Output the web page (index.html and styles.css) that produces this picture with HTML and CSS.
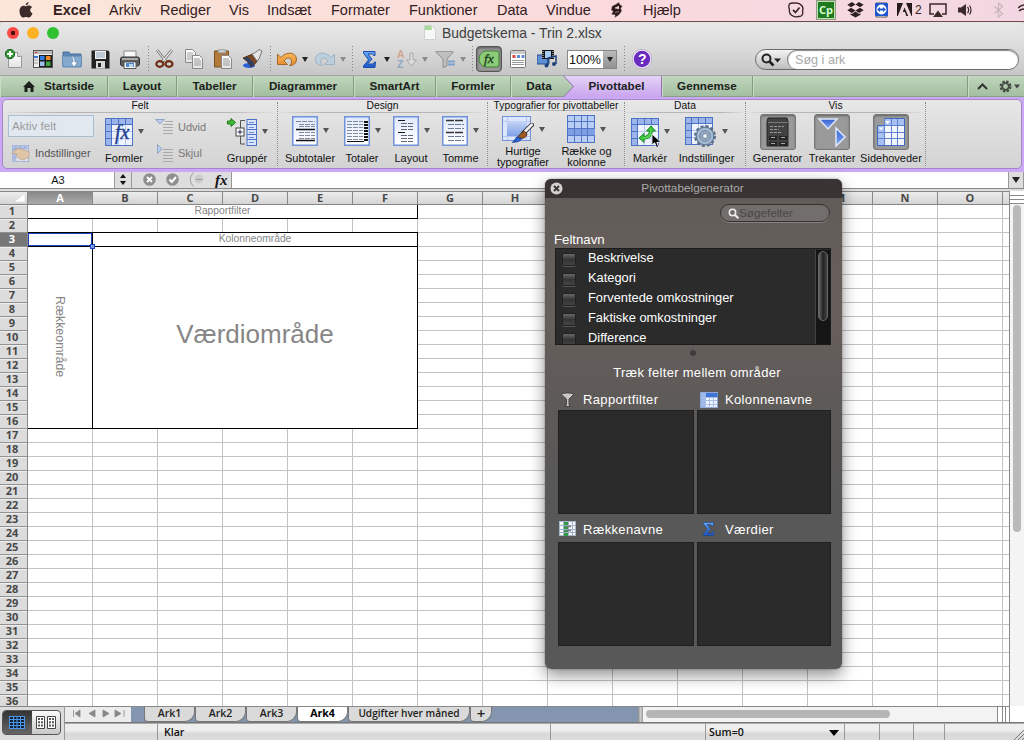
FILE: index.html
```html
<!DOCTYPE html>
<html lang="da">
<head>
<meta charset="utf-8">
<title>Budgetskema - Trin 2.xlsx</title>
<link rel="stylesheet" href="styles.css">
</head>
<body>
<svg class="defs" width="0" height="0">
  <defs>
    <linearGradient id="page" x1="0" y1="0" x2="0" y2="1"><stop offset="0" stop-color="#fff"/><stop offset="1" stop-color="#e4e4e4"/></linearGradient>
    <linearGradient id="blue" x1="0" y1="0" x2="0" y2="1"><stop offset="0" stop-color="#c6d6f8"/><stop offset="1" stop-color="#7f9fe4"/></linearGradient>
    <linearGradient id="sheet" x1="0" y1="0" x2="0" y2="1"><stop offset="0" stop-color="#dfe9fd"/><stop offset="1" stop-color="#fff"/></linearGradient>
    <linearGradient id="tri" x1="0" y1="0" x2="0" y2="1"><stop offset="0" stop-color="#3560cf"/><stop offset="1" stop-color="#7ea8f4"/></linearGradient>
    <linearGradient id="sig" x1="0" y1="0" x2="0" y2="1"><stop offset="0" stop-color="#67aaf2"/><stop offset="1" stop-color="#1c55c8"/></linearGradient>
    <linearGradient id="orange" x1="0" y1="0" x2="0" y2="1"><stop offset="0" stop-color="#f8b758"/><stop offset="1" stop-color="#e98a2c"/></linearGradient>
    <symbol id="pivot" viewBox="0 0 28 28">
      <rect x=".5" y=".5" width="27" height="27" fill="#eef3fe" stroke="#4d72c4"/>
      <path d="M1 1h26v5H1zM1 6h5v21H1z" fill="#9bb4ea"/>
      <path d="M13.500 1v5M20.500 1v5M1 13.500h5M1 20.500h5M6.500 1v26M1 6.500h26" stroke="#4d72c4" fill="none"/>
      <path d="M13.500 7v20M20.500 7v20M7 13.500h20M7 20.500h20" stroke="#b4c6f0" fill="none"/>
    </symbol>
    <symbol id="brush" viewBox="0 0 24 24">
      <path d="M22 2L13 11" stroke="#333" stroke-width="5" stroke-linecap="round"/>
      <path d="M22 2L14 10" stroke="#eee" stroke-width="3" stroke-linecap="round"/>
      <path d="M14 9l3 3c-1 4-4 5-7 5l-4-1c3-2 4-6 8-7z" fill="#9a5a20" stroke="#4d2c10"/>
      <path d="M6 15l5 2c-1 3-5 4-10 4 2-1 3-4 5-6z" fill="#2b62d4" stroke="#173c91"/>
    </symbol>
  </defs>
</svg>

<nav class="menubar">
  <svg width="14" height="16" viewBox="0 0 14 16"><path d="M9.500 0c.1 1.800-1.300 3.300-2.800 3.400C6.500 1.700 8 .2 9.500 0zM7 4.300c.8 0 1.700-.8 3-.7 1.300 0 2.400.7 3 1.700-2.600 1.500-2.200 5 .5 6-.7 2-2.200 4.300-3.700 4.300-1.100 0-1.500-.7-2.800-.7s-1.700.7-2.800.7C2.500 15.600.5 12.400.5 9.200c0-3.400 2-5.500 4-5.500 1.200 0 1.900.6 2.500.6z" fill="#3b2a2a"/></svg>
  <b>Excel</b><span>Arkiv</span><span>Rediger</span><span>Vis</span><span>Indsæt</span><span>Formater</span><span>Funktioner</span><span>Data</span><span>Vindue</span>
  <svg width="14" height="16" viewBox="0 0 14 16"><path d="M9 0l1 2.500L12.500 4 11 6.500l1 2.500-3 4-4.500 3 .5-3-4-.5 2-3L1 8l1-4 4-2zM9 4L5 6l4 1M5 10.500l4-1" fill="#2d1a1a" stroke="#f9dadb" stroke-width=".5"/></svg>
  <span>Hjælp</span>
  <svg width="16" height="16" viewBox="0 0 16 16"><path d="M2 1.500C4 .5 6 1.200 8 1c5 0 8 4 6.500 8 1 3-1 6-4 5.500C5 16 .5 12 1.500 7.500.5 5 .5 3 2 1.500z" fill="none" stroke="#3b2a2a" stroke-width="1.400"/><path d="M5 8l2.500 2.500 4-5" fill="none" stroke="#3b2a2a" stroke-width="1.800"/></svg>
  <span class="cp">Cp</span>
  <svg width="17" height="16" viewBox="0 0 17 16"><path d="M5 0l3.500 2.500L4 5.300.3 2.700zM12 0l4.700 2.700L13 5.300 8.500 2.500zM4 5.800l4.500 2.700L5 11 .3 8.300zM13 5.800l3.700 2.500L12 11 8.500 8.500zM8.500 9.500L12 12l1.500-.7v1.500l-5 2.700-5-2.700v-1.500L5 12z" fill="#2d1f20"/></svg>
  <svg width="14" height="16" viewBox="0 0 14 16"><path d="M1 1h11v14H1z" fill="#fff" stroke="#555"/><rect x="0" y="1" width="13" height="13" rx="1" fill="#1f55cf"/><circle cx="6.500" cy="7.500" r="5" fill="#fff"/><path d="M2 7.500l3-2.500v1.500h3V5l3 2.500L8 10V8.500H5V10z" fill="#1f55cf"/></svg>
  <span class="adobe"><svg width="15" height="16" viewBox="0 0 15 16"><path d="M0 1h15v13H0z" fill="#261a1c"/><path d="M6 1h3l5.500 13h-3.300L7.500 5.500 5.800 10h2.200l1.300 4H.8z" fill="#f0d8dd"/></svg><span>2</span></span>
  <svg width="18" height="15" viewBox="0 0 18 15"><path d="M5 11H1V1h16v10h-4" fill="none" stroke="#3b2a2a" stroke-width="1.500"/><path d="M9 7.500l5 6.500H4z" fill="#3b2a2a"/></svg>
  <svg width="14" height="14" viewBox="0 0 14 14"><path d="M0 4.500h3L8 1v12L3 9.500H0z" fill="#3b2a2a"/><path d="M9.500 4c1.500 1.500 1.500 4.500 0 6M11.500 2.500c2 2.500 2 6.500 0 9" fill="none" stroke="#3b2a2a" stroke-width="1.200"/></svg>
  <svg width="10" height="16" viewBox="0 0 10 16"><path d="M.5 4.500l8 7-4 3.500V1l4 3.500-8 7" fill="none" stroke="#cbb6bb" stroke-width="1.300"/></svg>
  <svg width="6" height="16" viewBox="0 0 6 16"><path d="M0 6c2-2 4-3 6-3M1 9c2-2 3-2 5-2" fill="none" stroke="#3b2a2a" stroke-width="1.500"/></svg>
</nav>

<div class="window">
  <header class="titlebar">
    <div class="lights"><i class="red"></i><i class="amber"></i><i class="green"></i></div>
    <div class="title">
      <svg width="12" height="15" viewBox="0 0 12 15"><path d="M.5.500h7l4 4v10H.5z" fill="#f7f7f7" stroke="#ccd5cc"/><path d="M1 1h6.500l.5 4H1z" fill="#a6d89b"/></svg>
      <span>Budgetskema - Trin 2.xlsx</span>
    </div>
  </header>

  <div class="toolbar">
    <svg width="19" height="20" viewBox="0 0 19 20"><path d="M3.500 3.500h9l4 4v11h-13z" fill="url(#page)" stroke="#999"/><path d="M12.500 3.500v4h4" fill="#ddd" stroke="#999"/><circle cx="5" cy="5" r="4.700" fill="#2f9a33" stroke="#16601a"/><path d="M5 2v6M2 5h6" stroke="#fff" stroke-width="2"/></svg>
    <svg width="20" height="18" viewBox="0 0 20 18"><rect x=".5" y=".5" width="19" height="17" fill="#eee" stroke="#555"/><path d="M1 1h18v3H1z" fill="#bbb"/><path d="M2 2h2v1H2z" fill="#d22"/><path d="M6 5h13v12H6z" fill="#1c1c1c"/><path d="M1 6h4v2H1z" fill="#3a78e0"/><path d="M1 10h4M1 13h4" stroke="#999"/><path d="M7 6h4.500v4H7z" fill="#2f7fea"/><path d="M13 6h4.500v4H13z" fill="#f08a24"/><path d="M7 11.500h4.500V16H7z" fill="#9fc1ee"/><path d="M13 11.500h4.500V16H13z" fill="#40aa3f"/></svg>
    <svg width="20" height="18" viewBox="0 0 20 18"><path d="M1 2h6l1 2h11v12H1z" fill="#5b87b5" stroke="#4a719a"/><path d="M0 6h20l-1 11H1z" fill="#84aacf" stroke="#5d85ad"/><path d="M9 6c3 0 4 3 4 6h2.500L12 17l-3.500-5H11c0-2 0-4-2-6z" fill="#fff" stroke="#4b6e94" stroke-width=".5"/></svg>
    <svg width="19" height="19" viewBox="0 0 19 19"><path d="M1 .5h16l1.500 1.500v16.500h-18V.5z" fill="#222"/><path d="M4 1h11v8H4z" fill="#f2f2f2"/><path d="M5 3h9M5 5h9M5 7h9" stroke="#8da0b8"/><path d="M5 11h9v7.500H5z" fill="#d8d8d8"/><path d="M7 13h3v4H7z" fill="#222"/></svg>
    <svg width="20" height="19" viewBox="0 0 20 19"><path d="M4 1h12v7H4z" fill="#fafafa" stroke="#888"/><rect x=".5" y="7" width="19" height="9" rx="2" fill="#5e5e5e" stroke="#333"/><path d="M2 8h16v2H2z" fill="#aaa"/><path d="M4 12h12v6.500H4z" fill="#f7f7f7" stroke="#555"/><path d="M6 13h8v4H6z" fill="#4e86cc"/><path d="M9 14h4v3H9z" fill="#b9d8f4"/></svg>
    <i class="dots"></i>
    <svg width="20" height="20" viewBox="0 0 20 20"><path d="M2 1l9.500 12M17 1L7 13" stroke="#777" stroke-width="2.800"/><path d="M2 1l9.500 12M17 1L7 13" stroke="#e4e4e4" stroke-width="1.200"/><ellipse cx="4.800" cy="15" rx="3.500" ry="2.800" fill="none" stroke="#6d2c14" stroke-width="2.200"/><ellipse cx="14" cy="15" rx="3.500" ry="2.800" fill="none" stroke="#6d2c14" stroke-width="2.200"/></svg>
    <svg width="19" height="20" viewBox="0 0 19 20"><path d="M.5.500h7l3 3v10H.5z" fill="url(#page)" stroke="#888"/><path d="M2 4h6M2 6h6M2 8h6M2 10h5" stroke="#aaa"/><path d="M7.500 6.500h7l3 3v10h-10z" fill="url(#page)" stroke="#888"/><path d="M9 10h6M9 12h7M9 14h7M9 16h7" stroke="#999"/></svg>
    <svg width="19" height="20" viewBox="0 0 19 20"><path d="M.5 2h14v16H.5z" fill="#b27a39" stroke="#79501f"/><path d="M4 1h2l1-1h2l1 1h2v3H4z" fill="#ccc" stroke="#777" stroke-width=".6"/><path d="M7.500 6.500h7l3 3v10h-10z" fill="url(#page)" stroke="#888"/><path d="M9 10h6M9 12h7M9 14h7M9 16h7" stroke="#999"/></svg>
    <svg width="21" height="20" viewBox="0 0 21 20"><ellipse cx="7" cy="16.500" rx="6" ry="2.500" fill="#2a5fd8"/><path d="M1 9l10-4 5 6c-2 3-4 5-7 7-1-3-4-6-8-9z" fill="#7a4824" stroke="#4d2f12"/><path d="M2 10c4 2 6 5 7 8l3-3c-1-3-4-5-7-7z" fill="#2f3f66"/><path d="M10 5c3-1 4-2 7-4.500l3 1.500c-1 3-2 5-3 8l-2 2z" fill="#e4e4e4" stroke="#777"/></svg>
    <i class="dots"></i>
    <svg width="20" height="16" viewBox="0 0 20 16"><path d="M.5 3v10.500h10L7 10c2-4 8-4 7.500 1 0 1.500-1 3-2 3.500 4 0 7-2 7-6.500C19 1 9 0 4 6.500z" fill="url(#orange)" stroke="#a2682a"/></svg>
    <i class="tri"></i>
    <svg width="20" height="16" viewBox="0 0 20 16"><path d="M19.500 3v10.500h-10L13 10c-2-4-8-4-7.500 1 0 1.500 1 3 2 3.500-4 0-7-2-7-6.500C1 1 11 0 16 6.500z" fill="#bccfdd" stroke="#9eb3c4"/></svg>
    <i class="tri dim"></i>
    <i class="dots"></i>
    <svg width="13" height="17" viewBox="0 0 13 17"><path d="M.5.500h11.500v4h-1.500c0-1-1-1.500-2-1.500H5l4 5.200L4.500 13H9c1.500 0 2-.7 2.300-2h1.200L12 16.500H.5V15l5-6.200-5-6.600z" fill="url(#sig)" stroke="#1d4eae"/></svg>
    <i class="tri"></i>
    <div class="sort"><div><span class="a">A</span><span class="z">Z</span></div><svg width="11" height="18" viewBox="0 0 11 18"><path d="M4 3h3v7h3.500l-5 6-5-6H4z" fill="#ddd" stroke="#a6a6a6"/></svg></div>
    <i class="tri dim"></i>
    <svg width="21" height="17" viewBox="0 0 21 17"><path d="M.5 1c4-1 14-1 18 0L12 8v7l-4 1.500V8z" fill="#bfbfbf" stroke="#8e8e8e"/><path d="M13 10.500h7M13 13.500h7" stroke="#7ea2d2" stroke-width="2"/></svg>
    <i class="tri dim"></i>
    <i class="dots"></i>
    <div class="fxbtn"><svg width="22" height="18" viewBox="0 0 22 18"><path d="M7 1h12q2 0 2 2v12q0 2-2 2H7Q1 15 1 9t6-8z" fill="#8ccb78" stroke="#3e7c34"/><text x="6" y="13" font-family="Liberation Serif, serif" font-style="italic" font-size="13.500" fill="#1b3a17" stroke="#1b3a17" stroke-width=".3">fx</text></svg></div>
    <svg width="16" height="18" viewBox="0 0 16 18"><rect x=".5" y=".5" width="15" height="17" rx="1" fill="#fff" stroke="#777"/><path d="M1 1h14v3H1z" fill="#ccc"/><path d="M2.500 5h3v3h-3z" fill="#e0463c"/><path d="M7 5h3v3H7zM11.500 5h3v3h-3z" fill="#5d8ad2"/><path d="M2 10.500h12M2 12.500h12M2 14.500h12" stroke="#999"/></svg>
    <svg width="20" height="18" viewBox="0 0 20 18"><path d="M0 5h12v9H0z" fill="#5d8fd5" stroke="#2d4e86"/><path d="M5 0h12v9H5z" fill="#111"/><path d="M8 1h6v7H8z" fill="#a9cdf2"/><path d="M6 1v8M16 1v8" stroke="#eee" stroke-dasharray="1 1"/><path d="M11 15V8l8-2v8" fill="none" stroke="#1d437c" stroke-width="1.500"/><circle cx="9.500" cy="15.500" r="2" fill="#1d437c"/><circle cx="17" cy="14" r="2" fill="#1d437c"/></svg>
    <div class="percent"><span>100%</span><b><i class="tri"></i></b></div>
    <i class="dots"></i>
    <svg width="20" height="20" viewBox="0 0 20 20"><circle cx="10" cy="10" r="9" fill="#6a2bc0" stroke="#f6f0ff" stroke-width="1.500"/><circle cx="10" cy="10" r="9.700" fill="none" stroke="#9c8bb5" stroke-width=".6"/><text x="6" y="15" font-family="Liberation Sans, sans-serif" font-weight="bold" font-size="14" fill="#fff">?</text></svg>
    <div class="search"><div class="lens"><svg width="20" height="15" viewBox="0 0 20 15"><circle cx="5.500" cy="5.500" r="4" fill="none" stroke="#222" stroke-width="2"/><path d="M8.500 8.500l4 4" stroke="#222" stroke-width="2.600"/><path d="M13 5.500h7l-3.500 4z" fill="#222"/></svg></div><span>Søg i ark</span></div>
  </div>

  <nav class="tabs">
    <span class="home"><svg width="12" height="11" viewBox="0 0 12 11"><path d="M6 0l6 6h-1.500v5h-3V7h-3v4h-3V6H0z" fill="#1c211b"/></svg>Startside</span>
    <span>Layout</span><span>Tabeller</span><span>Diagrammer</span><span>SmartArt</span><span>Formler</span><span class="before">Data</span>
    <span class="active"><em>Pivottabel</em></span><span>Gennemse</span>
    <span class="rest"></span>
    <span class="tools"><svg width="11" height="7" viewBox="0 0 11 7"><path d="M1 6l4.500-4.500L10 6" fill="none" stroke="#333" stroke-width="2"/></svg><svg width="21" height="13" viewBox="0 0 21 13"><circle cx="6.500" cy="6.500" r="4.700" fill="none" stroke="#444c43" stroke-width="2.600" stroke-dasharray="2.300 1.400"/><circle cx="6.500" cy="6.500" r="3.300" fill="none" stroke="#444c43" stroke-width="1.800"/><path d="M15 4.500h6l-3 4z" fill="#444"/></svg></span>
  </nav>

  <section class="ribbon">
    <div class="panel">
      <div class="group felt">
        <h3>Felt</h3>
        <div class="body">
          <div class="stack">
            <div class="field">Aktiv felt</div>
            <div class="row faded"><svg width="19" height="17" viewBox="0 0 28 26"><use href="#pivot" width="28" height="26"/><path d="M2 10l9-5 9 3 7 2v9l-10 4-8-4-1-5-6-1z" fill="#e6b98a" stroke="#9b7149"/></svg><span>Indstillinger</span></div>
          </div>
          <div class="btn"><div class="pic"><svg width="28" height="28" viewBox="0 0 28 28"><use href="#pivot"/><text x="10" y="21" font-family="Liberation Serif, serif" font-style="italic" font-size="20" fill="#1d3f8e" stroke="#1d3f8e" stroke-width=".4">fx</text></svg><i class="tri"></i></div><label>Formler</label></div>
          <div class="stack mini">
            <div class="row"><svg width="18" height="17" viewBox="0 0 18 17"><path d="M.5.500h9L5 5z" fill="#b8cff0" stroke="#8fa5c4"/><path d="M10 2.500h8M8 5.500h10M8 8.500h10M8 11.500h10M8 14.500h10" stroke="#a9a9a9"/></svg><span>Udvid</span></div>
            <div class="row"><svg width="18" height="19" viewBox="0 0 18 19"><path d="M2.500.500v9L7 5z" fill="#b8cff0" stroke="#8fa5c4"/><path d="M8 5.500h10M8 8.500h10M8 11.500h10M8 14.500h10M8 17.500h10" stroke="#a9a9a9"/></svg><span>Skjul</span></div>
          </div>
          <div class="btn"><div class="pic"><svg width="30" height="28" viewBox="0 0 30 28"><path d="M.5 3H4V.5L8.500 4.500 4 8.500V6H.5z" fill="#44bd36" stroke="#1d7a18"/><path d="M18 2.500h-4.500V26H18" fill="none" stroke="#555"/><rect x="9" y="10" width="8" height="8" fill="#fff" stroke="#444"/><path d="M13 11.500v5M10.500 14h5" stroke="#224"/><rect x="20" y="1.500" width="9.500" height="26" fill="#dbe6fc" stroke="#4d72c4"/><path d="M20 6.500h9M20 11.500h9M20 16.500h9M20 21.500h9" stroke="#4d72c4"/><path d="M22 4.500h5M22 9.500h5M22 14.500h5M22 19.500h5M22 24.500h5" stroke="#6d8dd6"/></svg><i class="tri"></i></div><label>Gruppér</label></div>
        </div>
      </div>
      <div class="group design">
        <h3>Design</h3>
        <div class="body">
          <div class="btn"><div class="pic"><svg width="26" height="30" viewBox="0 0 26 30"><rect x=".75" y=".75" width="24.500" height="28.500" fill="url(#sheet)" stroke="#7191d8" stroke-width="1.500"/><path d="M4 5.500h19M7 8.500h16M7 10.500h16M7 16.500h16M7 19.500h16M7 22.500h16" stroke="#808a9c" stroke-dasharray="5 1"/><path d="M4 13.500h19M4 24.500h19" stroke="#111" stroke-width="1.500"/></svg><i class="tri"></i></div><label>Subtotaler</label></div>
          <div class="btn"><div class="pic"><svg width="26" height="30" viewBox="0 0 26 30"><rect x=".75" y=".75" width="24.500" height="28.500" fill="url(#sheet)" stroke="#7191d8" stroke-width="1.500"/><path d="M3 5.500h16M3 8.500h16M3 11.500h16M3 14.500h16M3 17.500h16M3 20.500h16M3 23.500h16" stroke="#808a9c" stroke-dasharray="5 1"/><path d="M22 5v21" stroke="#111" stroke-width="4" stroke-dasharray="2 1"/><path d="M3 25.500h17" stroke="#111"/></svg><i class="tri"></i></div><label>Totaler</label></div>
          <div class="btn"><div class="pic"><svg width="26" height="30" viewBox="0 0 26 30"><rect x=".75" y=".75" width="24.500" height="28.500" fill="url(#sheet)" stroke="#7191d8" stroke-width="1.500"/><path d="M5 4.500h7M5 16.500h7" stroke="#111"/><path d="M8 7.500h12M8 10.500h12M8 13.500h12M8 19.500h12M8 22.500h12M8 25.500h12" stroke="#5d6675" stroke-dasharray="6 1"/></svg><i class="tri"></i></div><label>Layout</label></div>
          <div class="btn"><div class="pic"><svg width="26" height="30" viewBox="0 0 26 30"><rect x=".75" y=".75" width="24.500" height="28.500" fill="url(#sheet)" stroke="#7191d8" stroke-width="1.500"/><path d="M4 4.500h18M4 16.500h18" stroke="#333" stroke-width="1.300" stroke-dasharray="8 1"/><path d="M6 8.500h16M6 12.500h16M6 20.500h16M6 24.500h16" stroke="#6f7c94" stroke-dasharray="6 1"/></svg><i class="tri"></i></div><label>Tomme</label></div>
        </div>
      </div>
      <div class="group typo">
        <h3>Typografier for pivottabeller</h3>
        <div class="body">
          <div class="btn"><div class="pic"><svg width="32" height="30" viewBox="0 0 32 30"><rect x=".5" y="1.500" width="28" height="24" fill="#dbe6fc" stroke="#7191d8"/><path d="M5.500 2v23M24.500 2v23M1 6.500h27M1 21.500h27" stroke="#b3c7f2"/><path d="M5 6h19v15H5z" fill="url(#blue)"/><use href="#brush" x="9" y="8" width="23" height="22"/></svg><i class="tri"></i></div><label>Hurtige<br>typografier</label></div>
          <div class="btn"><div class="pic"><svg width="28" height="30" viewBox="0 0 28 30"><rect x=".5" y=".5" width="27" height="27" fill="#b9cdf6" stroke="#4d72c4"/><path d="M1 14h27v6H1z" fill="#7f9fe4"/><path d="M7.500 1v26M14.500 1v26M20.500 1v26M1 6.500h27M1 13.500h27M1 20.500h27" stroke="#5478c8"/></svg><i class="tri"></i></div><label>Række og<br>kolonne</label></div>
        </div>
      </div>
      <div class="group data">
        <h3>Data</h3>
        <div class="body">
          <div class="btn"><div class="pic"><svg width="28" height="28" viewBox="0 0 28 28"><use href="#pivot"/><path d="M12 20c5 0 8-3 8-8" fill="none" stroke="#1c8a24" stroke-width="4"/><path d="M15.500 13l4.500-5 4.500 5zM13 15.500L8 20l5 4.500z" fill="#3fc43f" stroke="#1c8a24"/><path d="M12 20c5 0 8-3 8-8" fill="none" stroke="#55d455" stroke-width="2"/></svg><i class="tri"></i>
            <svg class="cursor" width="11" height="16" viewBox="0 0 11 16"><path d="M1 1v11l2.700-2.300L5.500 14.500l2-.8-1.700-4.400H10z" fill="#000" stroke="#fff" stroke-width=".8"/></svg></div><label>Markér</label></div>
          <div class="btn"><div class="pic"><svg width="32" height="31" viewBox="0 0 32 31"><use href="#pivot" width="28" height="28"/><circle cx="20" cy="19" r="9.500" fill="#8fa6c2" stroke="#5b708d" stroke-width="3" stroke-dasharray="3 2"/><circle cx="20" cy="19" r="8.800" fill="#a4b8d1" stroke="#60758f"/><circle cx="20" cy="19" r="5.200" fill="#9ab0ca" stroke="#6b8099"/><circle cx="20" cy="19" r="2.500" fill="#f0f4fa" stroke="#6b8099"/></svg><i class="tri"></i></div><label>Indstillinger</label></div>
        </div>
      </div>
      <div class="group vis">
        <h3>Vis</h3>
        <div class="body">
          <div class="btn"><div class="well"><svg width="24" height="30" viewBox="0 0 24 30"><path d="M2 1h19l1 4v24H1V5z" fill="#424242" stroke="#222"/><path d="M2 5.500h20" stroke="#777"/><path d="M4 9.500h14M4 12.500h9M4 15.500h11" stroke="#999" stroke-dasharray="3 1"/><path d="M3 19h8v4H3zM13 19h8v4h-8zM3 25h8v4H3zM13 25h8v4h-8z" fill="#262626"/><path d="M5 20.500h4M15 20.500h4M5 26.500h4M15 26.500h4" stroke="#aaa"/></svg></div><label>Generator</label></div>
          <div class="btn"><div class="well"><svg width="30" height="30" viewBox="0 0 30 30"><path d="M2 2h18l-9 10z" fill="url(#tri)" stroke="#dfe7f7" stroke-width="1.500"/><path d="M19 11v18l9-9z" fill="url(#tri)" stroke="#dfe7f7" stroke-width="1.500"/></svg></div><label>Trekanter</label></div>
          <div class="btn"><div class="well"><svg width="28" height="28" viewBox="0 0 28 28"><path d="M7.500.500h20v27H.5v-20h7z" fill="#f3f6ff" stroke="#4268c0"/><path d="M7 1h20v6H7zM1 8h6v19H1z" fill="#a9c0f2"/><path d="M7.500 1v26M14.500 1v26M20.500 1v26M7 7.500h20M1 14.500h26M1 20.500h26" stroke="#6184d2"/><path d="M8 3h5l-2.500 3zM1.500 9.500h5L4 12z" fill="#fff"/></svg></div><label>Sidehoveder</label></div>
        </div>
      </div>
    </div>
  </section>

  <div class="formula">
    <div class="name">A3</div>
    <div class="step"><svg width="6" height="11" viewBox="0 0 6 11"><path d="M0 4l3-4 3 4zM0 7l3 4 3-4z" fill="#111"/></svg></div>
    <div class="ops">
      <svg width="13" height="13" viewBox="0 0 13 13"><circle cx="6.500" cy="6.500" r="6.300" fill="#8f8f8f"/><path d="M4 4l5 5M9 4l-5 5" stroke="#fff" stroke-width="1.800"/></svg>
      <svg width="13" height="13" viewBox="0 0 13 13"><circle cx="6.500" cy="6.500" r="6.300" fill="#8f8f8f"/><path d="M3.500 6.500l2.300 2.500L10 4" fill="none" stroke="#fff" stroke-width="2"/></svg>
      <svg width="16" height="15" viewBox="0 0 16 15"><path d="M5 .5C0 4 0 11 5 14.500" fill="none" stroke="#999"/><circle cx="10" cy="7" r="4.500" fill="#ccc"/><path d="M7 7.500h6" stroke="#999"/></svg>
      <span>fx</span>
    </div>
    <div class="input"></div>
    <div class="drop"><i class="tri"></i></div>
  </div>

  <main class="book">
    <div class="cols"><b class="corner"><svg width="12" height="9" viewBox="0 0 12 9"><path d="M11 0v9H0z" fill="#fff" stroke="#ccc" stroke-width=".5"/></svg></b><b class="sel">A</b><b>B</b><b>C</b><b>D</b><b>E</b><b>F</b><b>G</b><b>H</b><b>I</b><b>J</b><b>K</b><b>L</b><b>M</b><b>N</b><b>O</b><b class="end"></b></div>
    <div class="rows"><b>1</b><b>2</b><b class="sel">3</b><b>4</b><b>5</b><b>6</b><b>7</b><b>8</b><b>9</b><b>10</b><b>11</b><b>12</b><b>13</b><b>14</b><b>15</b><b>16</b><b>17</b><b>18</b><b>19</b><b>20</b><b>21</b><b>22</b><b>23</b><b>24</b><b>25</b><b>26</b><b>27</b><b>28</b><b>29</b><b>30</b><b>31</b><b>32</b><b>33</b><b>34</b><b>35</b><b>36</b></div>
    <div class="sheet">
      <div class="pivot">
        <div class="pfilter">Rapportfilter</div>
        <div class="pgap"></div>
        <div class="pcell"><i class="handle"></i></div>
        <div class="pcols">Kolonneområde</div>
        <div class="prows"><span>Rækkeområde</span></div>
        <div class="pvals">Værdiområde</div>
      </div>
    </div>
    <div class="vscroll"><div class="split"></div><div class="thumb"></div></div>
  </main>

  <footer class="bottom">
    <div class="views"><div class="toggle">
      <div class="on"><svg width="16" height="13" viewBox="0 0 16 13"><rect x=".5" y=".5" width="15" height="12" fill="#123" stroke="#4d96ea"/><path d="M4.500 0v13M8 0v13M11.500 0v13M0 3.500h16M0 6.500h16M0 9.500h16" stroke="#4d96ea"/></svg></div>
      <div><svg width="20" height="13" viewBox="0 0 20 13"><path d="M.5.500h8v12h-8zM11.500.500h8v12h-8z" fill="#fff" stroke="#444"/><path d="M3 2v9M6 2v9M14 2v9M17 2v9" stroke="#444" stroke-width="1.800" stroke-dasharray="2 1.300"/></svg></div>
    </div></div>
    <div class="sheetbar">
      <div class="nav"><svg width="55" height="9" viewBox="0 0 55 9"><path d="M1.500 1v7M8 1v7L3 4.500zM23 1v7l-6-3.500zM31 1v7l6-3.500zM43 1v7l6-3.500zM52 1v7" fill="#888" stroke="#888" stroke-width=".8"/></svg></div>
      <div class="sheets"><span>Ark1</span><span>Ark2</span><span>Ark3</span><span class="cur">Ark4</span><span class="long">Udgifter hver måned</span><span class="plus">+</span></div>
      <div class="grip"></div>
      <div class="hscroll"><div class="thumb"></div></div>
      <div class="hsplit"></div>
      <div class="void"></div>
    </div>
    <div class="status"><span></span><span>Klar</span><span></span><span class="sum">Sum=0<svg width="10" height="6" viewBox="0 0 10 6"><path d="M0 0h10L5 6z" fill="#000"/></svg></span><span></span><span></span><span></span><span class="last"><svg width="12" height="12" viewBox="0 0 12 12"><path d="M1 12L12 1M5 12l7-7M9 12l3-3" stroke="#777"/></svg></span></div>
  </footer>
</div>

<aside class="builder">
  <header><svg width="13" height="13" viewBox="0 0 13 13"><circle cx="6.500" cy="6.500" r="6" fill="#d4d2d1"/><path d="M4 4l5 5M9 4l-5 5" stroke="#3a3534" stroke-width="1.900"/></svg><span>Pivottabelgenerator</span></header>
  <div class="find"><svg width="11" height="11" viewBox="0 0 11 11"><circle cx="4.500" cy="4.500" r="3.200" fill="none" stroke="#eee" stroke-width="1.500"/><path d="M6.800 6.800l3.500 3.500" stroke="#eee" stroke-width="2"/></svg>Søgefelter</div>
  <h4>Feltnavn</h4>
  <div class="list">
    <ul><li><i></i>Beskrivelse</li><li><i></i>Kategori</li><li><i></i>Forventede omkostninger</li><li><i></i>Faktiske omkostninger</li><li><i></i>Difference</li></ul>
    <div class="bar"><div></div></div>
  </div>
  <div class="dot"></div>
  <p>Træk felter mellem områder</p>
  <div class="zones">
    <h5><svg width="18" height="16" viewBox="0 0 18 16"><path d="M2 2c4-1.500 9-1.500 13 0l-5 5v6l2 1.500H5L7.500 13V7z" fill="#c9c9c9" stroke="#444"/></svg>Rapportfilter</h5>
    <h5><svg width="18" height="16" viewBox="0 0 18 16"><rect x=".5" y=".5" width="17" height="15" fill="#eef4ff" stroke="#8fa6d6"/><path d="M1 1h4v14H1z" fill="#9db8e8"/><path d="M5.500 1h12v4h-12z" fill="#3f73d6"/><path d="M5.500 5v11M9.500 5v11M13.500 5v11M1 5.500h16M1 8.500h16M1 12.500h16" stroke="#a9bee6"/></svg>Kolonnenavne</h5>
    <div class="zone"></div><div class="zone"></div>
    <h5><svg width="18" height="16" viewBox="0 0 18 16"><rect x=".5" y=".5" width="16" height="14" fill="#f5f7fa" stroke="#a9b5c8"/><path d="M5 1h4v14H5z" fill="#2f9a46"/><path d="M4.500 0v15M9.500 0v15M13.500 0v15M1 4.500h16M1 8.500h16M1 11.500h16" stroke="#a3b1c9"/><path d="M7 5.500h5M7 9.500h5" stroke="#777" stroke-width="1.500"/></svg>Rækkenavne</h5>
    <h5><svg width="18" height="16" viewBox="0 0 18 16"><path d="M3.500 1.500h10v3.500h-1.500l-1-1.500H7L10.500 8 7 12.500h4.500l1-2H14l-.5 4h-10V13l4-5-4-5z" fill="url(#sig)" stroke="#1b3f8d" stroke-width=".6"/></svg>Værdier</h5>
    <div class="zone"></div><div class="zone"></div>
  </div>
</aside>
</body>
</html>
```
FILE: styles.css
```css
* { box-sizing: border-box; }
body { margin: 0; width: 1024px; height: 740px; overflow: hidden; background: #dcdcdc; font-family: "Liberation Sans", Arial, sans-serif; color: #111; position: relative; }
h3, h4, h5, p, ul { margin: 0; padding: 0; font-weight: normal; }
svg { display: block; flex: none; }
.defs { position: absolute; }
.tri { display: block; flex: none; width: 0; height: 0; border: 3px solid transparent; border-top: 5px solid #222; border-bottom: 0; }
.tri.dim { border-top-color: #8b8b8b; }

/* system menu bar */
.menubar { display: grid; grid-template-columns: 34px 56px 51px 69px 38px 64px 78px 88px 49px 64px 33px 145px 29px 30px 28px 22px 32px 29px 36px 24px 6px; align-items: center; height: 22px; padding: 0 0 1px 19px; border-bottom: 1px solid #6b4a48; background: linear-gradient(90deg, #fbe6d9, #fbe0d9 30%, #fadadd 60%, #f2d7e2); font-size: 14.5px; color: #33201f; white-space: nowrap; line-height: 19px; }
.menubar .cp { width: 18px; height: 18px; border: 1px solid #bfe0ae; outline: 1px solid #8b9c80; background: #1f7a1f; color: #d9ffcf; font: bold 11px/16px "Open Sans", sans-serif; text-align: center; }
.adobe { display: flex; align-items: center; gap: 3px; font-size: 12px; line-height: 16px; }

.window { height: 718px; display: flex; flex-direction: column; }
.titlebar { display: grid; grid-template-columns: 424px 1fr; align-items: center; height: 22px; background: linear-gradient(#e8e8e8, #dedede); border-radius: 5px 5px 0 0; }
.lights { display: flex; gap: 8px; padding-left: 7px; }
.lights i { width: 12px; height: 12px; border-radius: 50%; }
.red { background: radial-gradient(circle, #4c0c0b 2px, #fc4a47 2.5px); }
.amber { background: #fdb124; }
.green { background: #30c231; }
.title { display: flex; gap: 6px; align-items: center; font-size: 13.9px; color: #3f3f3f; }

.toolbar { display: grid; grid-template-columns: 28px 29px 29px 29px 28px 7px 30px 29px 28px 28px 7px 25px 13px 25px 12px 11px 21px 13px 25px 13px 25px 12px 4px 34px 27px 30px 57px 8px 123px 264px; align-items: center; height: 32px; padding: 1px 5px; background: linear-gradient(#dedede, #c6c6c6); border-bottom: 1px solid #a4a4a4; }
.dots { width: 1px; height: 26px; background: repeating-linear-gradient(#888 0 1px, transparent 1px 3px); }
.sort { display: flex; align-items: center; }
.sort span { display: block; width: 9px; font-size: 10.5px; font-weight: bold; line-height: 10px; }
.sort .a { color: #d2a68e; }
.sort .z { color: #8da5bf; }
.fxbtn { width: 26px; height: 26px; display: grid; place-items: center; border: 1px solid #555; border-radius: 4px; background: #999; box-shadow: inset 0 1px 3px #555; }
.percent { display: flex; width: 50px; height: 19px; border: 1px solid #888; background: #fff; font-size: 12.5px; line-height: 18px; }
.percent span { width: 35px; padding-left: 1px; }
.percent b { flex: 1; display: grid; place-items: center; background: linear-gradient(#bbb, #929292); }
.search { display: flex; width: 264px; height: 21px; border: 1px solid #6a6a6a; border-radius: 11px; background: linear-gradient(#f4f4f4, #bcbcbc); }
.search .lens { width: 31px; padding: 3px 0 0 5px; }
.search span { flex: 1; border-radius: 10px; border-left: 1px solid #777; background: #fff; color: #aaa; font-size: 12.6px; line-height: 21px; padding-left: 7px; box-shadow: inset 0 1px 1px #888; }

/* ribbon tabs */
.tabs { display: grid; grid-template-columns: 108px 69px 76px 101px 82px 75px 52px 99px 91px 215px 56px; height: 21px; background: linear-gradient(#c0d6bd, #a2bea0); border-bottom: 1px solid #86a184; font-weight: bold; font-size: 11.7px; line-height: 20px; text-align: center; color: #1c211b; }
.tabs > span { border-right: 1px solid #819c7e; box-shadow: inset 1px 0 #c8dcc6; }
.tabs .before { border: 0; padding-left: 4px; }
.tabs .home { display: flex; align-items: center; gap: 9px; padding-left: 23px; }
.tabs .active { border: 0; background: #8d72ab; clip-path: polygon(0 0, 100% 0, 100% 100%, 0 100%, 10px 50%); height: 21px; box-shadow: none; }
.tabs .active em { display: block; font-style: normal; height: 21px; padding-left: 8px; background: linear-gradient(#e5d3f8, #c9a5ee); clip-path: polygon(1px 0, 98px 0, 98px 100%, 1px 100%, 11px 50%); }
.tabs .tools { display: flex; align-items: center; gap: 11px; padding-left: 9px; border: 0; }

.ribbon { height: 75px; padding: 2px 2px 3px; background: #caa8f6; }
.panel { display: flex; height: 70px; border: 1px solid #a387c8; border-radius: 5px; background: linear-gradient(#e7e7e7, #d3d3d3); }
.group { display: flex; flex-direction: column; border-right: 1px dotted #8d8d8d; margin: 2px 0; font-size: 11px; }
.group h3 { height: 11px; font-size: 10.3px; line-height: 8px; text-align: center; white-space: nowrap; border-bottom: 1px solid; border-image: linear-gradient(90deg, transparent, #b5b5b5 20%, #b5b5b5 80%, transparent) 1; }
.body { display: flex; }
.felt { width: 275px; } .design { width: 210px; } .typo { width: 137px; } .data { width: 121px; } .vis { width: 180px; }
.felt .body { display: grid; grid-template-columns: 97px 48px 70px 58px; }
.design .body { display: grid; grid-template-columns: 52px 52px 46px 53px; padding-left: 6px; }
.typo .body { display: grid; grid-template-columns: 64px 63px; padding-left: 3px; }
.data .body { display: grid; grid-template-columns: 48px 65px; padding-left: 1px; }
.vis .body { display: grid; grid-template-columns: 59px 50px 68px; padding-left: 2px; }
.btn { display: flex; flex-direction: column; align-items: center; }
.pic { display: flex; align-items: center; justify-content: center; gap: 5px; height: 37px; padding-top: 2px; position: relative; }
.pic .tri { border-top-color: #555; margin-top: -2px; }
.design .pic { padding-top: 0; }
.btn label { display: block; text-align: center; line-height: 12px; height: 12px; margin-top: 2px; white-space: nowrap; }
.typo .btn label { line-height: 11px; height: 22px; margin-top: -2px; }
.well { width: 36px; height: 36px; margin-top: 1px; display: grid; place-items: center; border: 1px solid #777; border-radius: 3px; background: #9a9a9a; box-shadow: inset 0 1px 2px #666; }
.cursor { position: absolute; left: 20px; top: 20px; }
.stack { display: flex; flex-direction: column; }
.field { width: 86px; height: 22px; margin: 2px 0 8px 5px; border: 1px solid #a9bed3; background: #e1e8ef; color: #9d9d9d; padding-left: 3px; font-size: 11.7px; line-height: 19px; }
.row { display: flex; align-items: center; gap: 5px; color: #777; }
.faded { padding-left: 8px; color: #555; }
.faded svg { opacity: .6; }
.mini { padding: 6px 0 0 7px; gap: 8px; }

/* formula bar */
.formula { display: grid; grid-template-columns: 115px 17px 100px 777px 15px; height: 19px; border-bottom: 2px solid #dedede; background: #dedede; box-shadow: inset 0 -1px #888; }
.formula > div { height: 16px; border-right: 1px solid #999; }
.formula .name { background: #fff; font-size: 11px; line-height: 16px; text-align: center; padding-left: 2px; }
.step, .drop { display: grid; place-items: center; }
.formula .input { background: #fff; }
.drop .tri { border-width: 6px 4px 0; }
.ops { display: flex; align-items: center; gap: 10px; padding-left: 11px; }
.ops span { font: italic bold 15px/14px "Liberation Serif", serif; }

/* worksheet */
.book { display: grid; grid-template-columns: 28px 982px 14px; grid-template-rows: 14px 502px; height: 516px; overflow: hidden; background: #fff; }
.book b { font-family: "Open Sans", sans-serif; font-size: 11px; text-align: center; color: #484848; }
.cols { grid-column: 1 / 3; display: grid; grid-template-columns: 28px repeat(15, 65px) 7px; border-top: 1px solid #888; border-bottom: 1px solid #848484; background: linear-gradient(#ececec, #d5d5d5); overflow: hidden; }
.cols b { border-right: 1px solid #888; line-height: 11px; height: 12px; }
.cols .corner { display: flex; justify-content: flex-end; align-items: center; padding-right: 1px; }
.cols .sel { background: linear-gradient(#888, #aaa); color: #fff; }
.rows { overflow: hidden; border-right: 1px solid #888; }
.rows b { display: block; height: 14px; line-height: 11px; padding-right: 3px; border-bottom: 1px solid #919191; background: #dcdcdc; box-shadow: inset 0 1px #eee; }
.rows .sel { background: #777; color: #fff; box-shadow: none; }
.sheet { border-right: 1px solid #888; background-color: #fff; background-image: linear-gradient(90deg, transparent 64px, #c2c2c2 64px), linear-gradient(transparent 13px, #c2c2c2 13px); background-size: 65px 14px; }
.pivot { display: grid; grid-template-columns: 65px 325px; grid-template-rows: 14px 14px 14px 182px; width: 390px; color: #868686; font-size: 10.3px; text-align: center; }
.pfilter { grid-column: 1 / 3; background: #fff; border-right: 1px solid #000; border-bottom: 1px solid #000; line-height: 11px; }
.pgap { grid-column: 1 / 3; border-bottom: 1px solid #000; }
.pcell { background: #fff; border-right: 1px solid #000; border-bottom: 1px solid #000; box-shadow: inset 0 0 0 1px #1b44c4; position: relative; }
.handle { position: absolute; right: -3px; bottom: -3px; width: 5px; height: 5px; background: #7f9ce4; border: 1px solid #1b44c4; }
.pcols { background: #fff; border-right: 1px solid #000; border-bottom: 1px solid #000; line-height: 11px; }
.prows { display: grid; place-items: center; padding-bottom: 2px; background: #fff; border-right: 1px solid #000; border-bottom: 1px solid #000; font-size: 12.4px; }
.prows span { writing-mode: vertical-rl; }
.pvals { background: #fff; border-right: 1px solid #000; border-bottom: 1px solid #000; font-size: 26px; line-height: 175px; }
.vscroll { grid-column: 3; grid-row: 1 / 3; background: #f4f4f4; padding: 0 3px; }
.split { height: 13px; margin: 0 -3px 1px; border-bottom: 1px solid #888; background: linear-gradient(#fff 4px, #888 4px 5px, #fff 5px 8px, #888 8px 9px, #fff 9px); }
.vscroll .thumb { width: 8px; height: 327px; border-radius: 4px; background: #b9b9b9; }

/* sheet tabs and status bar */
.bottom { display: grid; grid-template-columns: 65px 959px; grid-template-rows: 17px 17px; height: 34px; }
.views { grid-row: 1 / 3; padding: 3px 3px 0 2px; background: #dcdcdc; border-right: 1px solid #999; border-top: 1px solid #888; }
.toggle { display: flex; height: 25px; border: 1px solid #555; border-radius: 4px; overflow: hidden; background: linear-gradient(#fafafa, #c8c8c8); }
.toggle > div { flex: 1; display: grid; place-items: center; }
.toggle .on { background: linear-gradient(#333, #666); }
.sheetbar { display: grid; grid-template-columns: 66px 507px 5px 354px 13px 14px; height: 17px; background: #8495af; }
.sheetbar > div { border-top: 1px solid #888; border-bottom: 1px solid #777; }
.nav { background: #ececec; padding: 2px 0 0 7px; }
.sheets { display: flex; padding-left: 13px; font: 600 10.6px/12px "Open Sans", sans-serif; color: #222; }
.sheets span { width: 51px; text-align: center; background: #dadada; border: 1px solid #777; border-top: 0; border-radius: 0 0 10px 4px; height: 15px; }
.sheets .cur { background: #fff; font-weight: bold; color: #000; }
.sheets .long { width: 122px; font-size: 10.1px; }
.sheets .plus { width: 22px; font-size: 15px; }
.grip { background: linear-gradient(90deg, #888, #ccc, #999); }
.hscroll { background: #f3f3f3; padding: 3px; }
.hscroll .thumb { width: 244px; height: 8px; border-radius: 4px; background: #b5b5b5; }
.hsplit { background: linear-gradient(90deg, #fff 4px, #888 4px 5px, #fff 5px 7px, #888 7px 8px, #fff 8px); border-left: 1px solid #888; border-right: 1px solid #888; }
.sheetbar .void { background: #fff; border-top: 0; }
.status { display: grid; grid-template-columns: 93px 393px 155px 139px 35px 34px 31px 79px; background: linear-gradient(#eee 0 6px, #d8d8d8 10px, #dcdcdc); font: 600 10.6px/17px "Open Sans", sans-serif; border-top: 1px solid #aaa; }
.status span { border-right: 1px solid #999; padding-left: 6px; }
.status .sum { display: flex; justify-content: space-between; align-items: center; padding: 0 5px 0 3px; }
.status .last { border: 0; display: flex; justify-content: flex-end; align-items: flex-end; }

/* floating pivot builder */
.builder { position: absolute; z-index: 2; left: 545px; top: 179px; width: 297px; height: 490px; border-radius: 6px; overflow: hidden; color: #fff; background: linear-gradient(#625c59 20px, #675f5c 140px, #5e5a58 220px, #585858 320px, #585858); box-shadow: 0 6px 16px rgba(0, 0, 0, .45), 0 0 2px rgba(0, 0, 0, .4); font-size: 13px; }
.builder header { display: grid; grid-template-columns: 13px 1fr; align-items: center; height: 19px; padding: 0 20px 0 5px; background: #393433; color: #aaa; font-size: 11.8px; line-height: 19px; text-align: center; }
.find { display: flex; align-items: center; gap: 0; width: 110px; height: 18px; margin: 6px 0 0 175px; padding-left: 7px; border: 1px solid #343130; border-radius: 9px; background: #716e6c; color: #4b4847; font-size: 11.7px; line-height: 14px; box-shadow: 0 1px #88817e; }
.builder h4 { margin: 9px 0 0 9px; height: 17px; line-height: 18px; font-size: 13.2px; }
.list { display: flex; width: 276px; height: 97px; margin-left: 10px; border: 1px solid #1d1d1d; background: #2b2b2b; overflow: hidden; }
.list ul { width: 259px; list-style: none; font-size: 12.85px; }
.list li { display: flex; align-items: center; gap: 12px; height: 20px; padding-left: 6px; line-height: 18px; }
.list li:first-child { margin-top: -1px; }
.list li i { width: 14px; height: 13px; margin-top: 3px; border: 1px solid #222; border-radius: 2px; background: linear-gradient(#686868, #353535 50%, #444); box-shadow: 0 1px #555; }
.bar { width: 15px; margin-top: 1px; padding: 1px 2px; background: #151515; border-left: 1px solid #444; }
.bar div { height: 70px; border-radius: 6px; border: 1px solid #666; background: linear-gradient(90deg, #666, #222 50%, #444); }
.dot { width: 6px; height: 6px; margin: 5px 0 0 145px; border-radius: 50%; background: #3f3c3b; }
.builder p { height: 20px; margin-top: 7px; padding-left: 7px; text-align: center; line-height: 20px; letter-spacing: .3px; }
.zones { display: grid; grid-template-columns: 136px 134px; grid-template-rows: 21px 104px 28px 104px; column-gap: 3px; padding: 6px 0 0 13px; }
.zones h5 { display: flex; align-items: center; gap: 6px; padding-left: 1px; font-size: 13px; letter-spacing: .35px; }
.zones h5:nth-of-type(even) { padding-left: 3px; gap: 7px; }
.zones h5:nth-of-type(n + 3) { padding-top: 2px; }
.zone { background: #2b2b2b; border: 1px solid #202020; }
```
